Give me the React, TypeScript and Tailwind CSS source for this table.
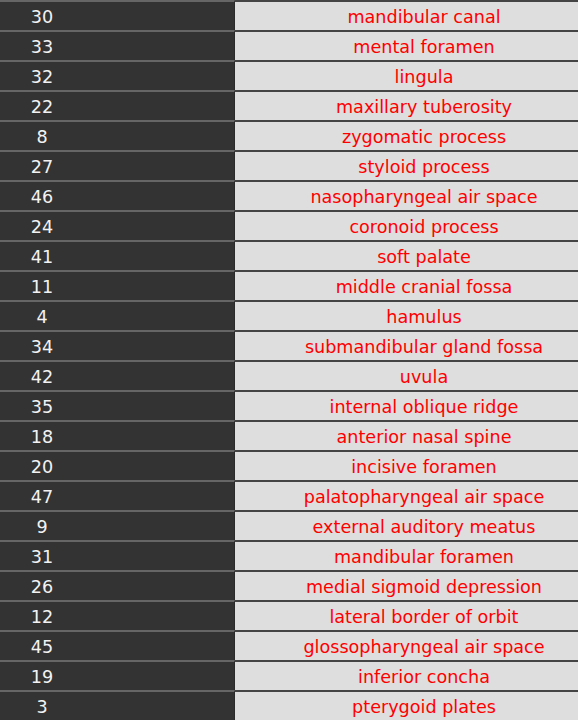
import React from "react";

const rows: [number, string][] = [
  [30, "mandibular canal"],
  [33, "mental foramen"],
  [32, "lingula"],
  [22, "maxillary tuberosity"],
  [8, "zygomatic process"],
  [27, "styloid process"],
  [46, "nasopharyngeal air space"],
  [24, "coronoid process"],
  [41, "soft palate"],
  [11, "middle cranial fossa"],
  [4, "hamulus"],
  [34, "submandibular gland fossa"],
  [42, "uvula"],
  [35, "internal oblique ridge"],
  [18, "anterior nasal spine"],
  [20, "incisive foramen"],
  [47, "palatopharyngeal air space"],
  [9, "external auditory meatus"],
  [31, "mandibular foramen"],
  [26, "medial sigmoid depression"],
  [12, "lateral border of orbit"],
  [45, "glossopharyngeal air space"],
  [19, "inferior concha"],
  [3, "pterygoid plates"],
];

export default function App() {
  return (
    <div
      className="w-[578px] h-[720px] overflow-hidden bg-[#333333]"
      style={{ fontFamily: '"DejaVu Sans", Verdana, sans-serif' }}
    >
      {rows.map(([n, label]) => (
        <div key={label} className="flex h-[30px]">
          {/* numéro */}
          <div className="w-[235px] shrink-0 flex bg-[#333333] border-t-2 border-[#666666] border-r border-r-[#2a2a2a]">
            <div className="w-[84px] flex items-center justify-center text-[17.6px] text-[#f2f2f2] pt-[3px]">
              {n}
            </div>
          </div>
          {/* nom */}
          <div className="w-[378px] shrink-0 flex items-center justify-center bg-[#dedede] border-t-2 border-[#444444] text-[17.6px] text-[#ff0000] pt-[3px]">
            {label}
          </div>
        </div>
      ))}
    </div>
  );
}
